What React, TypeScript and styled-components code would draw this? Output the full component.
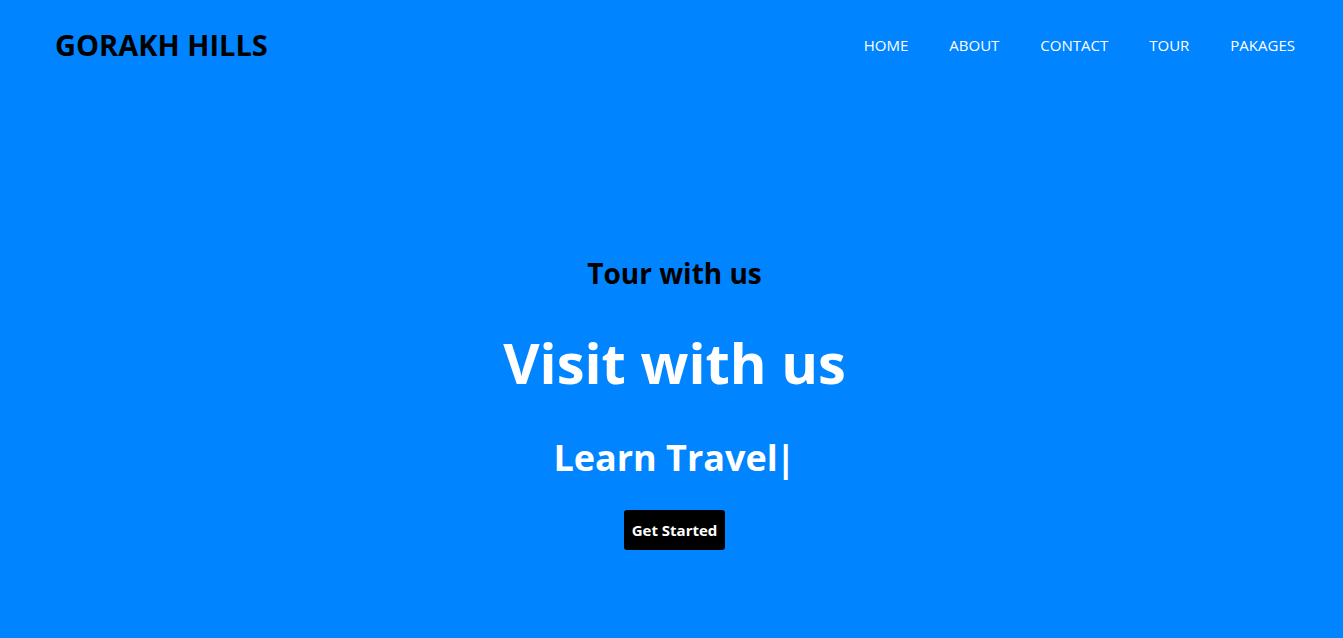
import React from "react";
import styled, { createGlobalStyle } from "styled-components";

const Global = createGlobalStyle`
  html, body { margin: 0; padding: 0; }
  body { background: #0084ff; font-family: "Open Sans", "Noto Sans", sans-serif; }
  * { box-sizing: border-box; }
`;

const Page = styled.div`
  min-height: 638px;
  background: #0084ff;
  display: flex;
  flex-direction: column;
`;

const Header = styled.header`
  height: 89px;
  display: flex;
  align-items: center;
  justify-content: space-between;
  padding: 0 48px 0 55px;
`;

const Logo = styled.div`
  font-size: 29px;
  font-weight: 700;
  color: #000;
`;

const Nav = styled.nav`
  display: flex;
  gap: 41px;
`;

const NavLink = styled.a`
  color: #fff;
  font-size: 15px;
  text-decoration: none;
  text-transform: uppercase;
`;

const Hero = styled.section`
  display: flex;
  flex-direction: column;
  align-items: center;
  padding: 164px 0 0 6px;
`;

const Kicker = styled.h3`
  margin: 0;
  font-size: 28px;
  font-weight: 700;
  color: #000;
  line-height: 40px;
`;

const Title = styled.h1`
  margin: 29px 0 0;
  font-size: 56px;
  font-weight: 700;
  color: #fff;
  line-height: 80px;
`;

const Sub = styled.h2`
  margin: 28px 0 0;
  font-size: 36px;
  font-weight: 700;
  color: #fff;
  line-height: 56px;
`;

const Cursor = styled.span`
  display: inline-block;
  margin-left: -2px;
  font-weight: 700;
`;

const Button = styled.button`
  margin-top: 24px;
  width: 101px;
  height: 40px;
  background: #000;
  color: #fff;
  border: none;
  border-radius: 3px;
  font-family: inherit;
  font-size: 15px;
  font-weight: 700;
  padding: 0;
  cursor: pointer;
`;

export default function App() {
  return (
    <Page>
      <Global />
      <Header>
        <Logo>GORAKH HILLS</Logo>
        <Nav>
          <NavLink href="#">Home</NavLink>
          <NavLink href="#">About</NavLink>
          <NavLink href="#">Contact</NavLink>
          <NavLink href="#">Tour</NavLink>
          <NavLink href="#">Pakages</NavLink>
        </Nav>
      </Header>
      <Hero>
        <Kicker>Tour with us</Kicker>
        <Title>Visit with us</Title>
        <Sub>
          Learn Travel<Cursor>|</Cursor>
        </Sub>
        <Button>Get Started</Button>
      </Hero>
    </Page>
  );
}
